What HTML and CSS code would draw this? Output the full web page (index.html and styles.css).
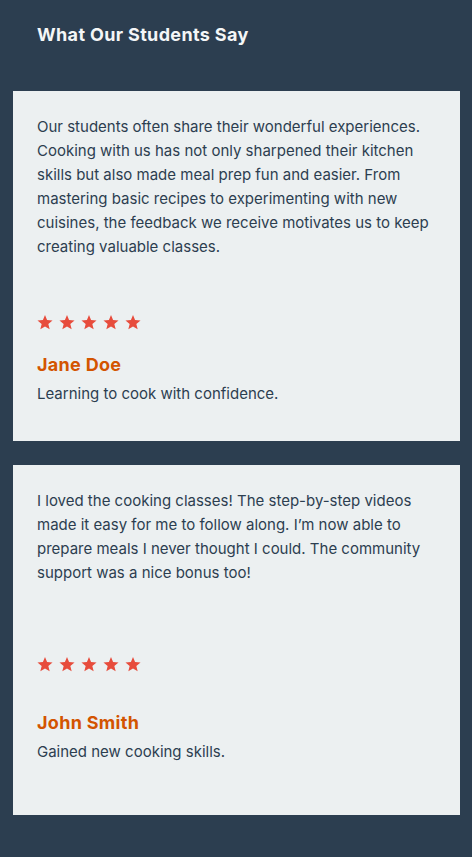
FILE: index.html
```html
<!DOCTYPE html>
<html lang="en">
<head>
<meta charset="utf-8">
<title>What Our Students Say</title>
<link rel="stylesheet" href="styles.css">
</head>
<body>
<section class="testimonials">
  <h2 class="title">What Our Students Say</h2>
  <div class="list">
    <article class="card">
      <p class="quote">Our students often share their wonderful experiences. Cooking with us has not only sharpened their kitchen skills but also made meal prep fun and easier. From mastering basic recipes to experimenting with new cuisines, the feedback we receive motivates us to keep creating valuable classes.</p>
      <div class="stars" aria-label="5 stars">
        <svg class="star" viewBox="0 0 24 24"><path d="M12 1.5l3.1 7.6 8.2.6-6.3 5.3 2 8-7-4.4-7 4.4 2-8L.7 9.7l8.2-.6z"/></svg>
        <svg class="star" viewBox="0 0 24 24"><path d="M12 1.5l3.1 7.6 8.2.6-6.3 5.3 2 8-7-4.4-7 4.4 2-8L.7 9.7l8.2-.6z"/></svg>
        <svg class="star" viewBox="0 0 24 24"><path d="M12 1.5l3.1 7.6 8.2.6-6.3 5.3 2 8-7-4.4-7 4.4 2-8L.7 9.7l8.2-.6z"/></svg>
        <svg class="star" viewBox="0 0 24 24"><path d="M12 1.5l3.1 7.6 8.2.6-6.3 5.3 2 8-7-4.4-7 4.4 2-8L.7 9.7l8.2-.6z"/></svg>
        <svg class="star" viewBox="0 0 24 24"><path d="M12 1.5l3.1 7.6 8.2.6-6.3 5.3 2 8-7-4.4-7 4.4 2-8L.7 9.7l8.2-.6z"/></svg>
      </div>
      <div class="author">
        <h3 class="name">Jane Doe</h3>
        <p class="role">Learning to cook with confidence.</p>
      </div>
    </article>
    <article class="card">
      <p class="quote">I loved the cooking classes! The step-by-step videos made it easy for me to follow along. I’m now able to prepare meals I never thought I could. The community support was a nice bonus too!</p>
      <div class="stars" aria-label="5 stars">
        <svg class="star" viewBox="0 0 24 24"><path d="M12 1.5l3.1 7.6 8.2.6-6.3 5.3 2 8-7-4.4-7 4.4 2-8L.7 9.7l8.2-.6z"/></svg>
        <svg class="star" viewBox="0 0 24 24"><path d="M12 1.5l3.1 7.6 8.2.6-6.3 5.3 2 8-7-4.4-7 4.4 2-8L.7 9.7l8.2-.6z"/></svg>
        <svg class="star" viewBox="0 0 24 24"><path d="M12 1.5l3.1 7.6 8.2.6-6.3 5.3 2 8-7-4.4-7 4.4 2-8L.7 9.7l8.2-.6z"/></svg>
        <svg class="star" viewBox="0 0 24 24"><path d="M12 1.5l3.1 7.6 8.2.6-6.3 5.3 2 8-7-4.4-7 4.4 2-8L.7 9.7l8.2-.6z"/></svg>
        <svg class="star" viewBox="0 0 24 24"><path d="M12 1.5l3.1 7.6 8.2.6-6.3 5.3 2 8-7-4.4-7 4.4 2-8L.7 9.7l8.2-.6z"/></svg>
      </div>
      <div class="author">
        <h3 class="name">John Smith</h3>
        <p class="role">Gained new cooking skills.</p>
      </div>
    </article>
  </div>
</section>
</body>
</html>
```
FILE: styles.css
```css
html, body {
  margin: 0;
  padding: 0;
  background: #2c3e50;
}
body {
  font-family: Inter, "Noto Sans", sans-serif;
  color: #2c3e50;
}
.testimonials {
  padding: 21px 12px 42px 13px;
}
.title {
  margin: 0 0 0 24px;
  font-size: 18px;
  line-height: 27px;
  font-weight: 700;
  color: #f4f6f7;
  letter-spacing: 0.35px;
}
.list {
  margin-top: 43px;
  display: flex;
  flex-direction: column;
  gap: 24px;
}
.card {
  background: #ecf0f1;
  height: 350px;
  box-sizing: border-box;
  padding: 24px 24px 35px;
  display: flex;
  flex-direction: column;
  justify-content: space-between;
}
.card::after {
  content: "";
}
.quote {
  margin: 0 0 55px;
  font-size: 15px;
  line-height: 24px;
}
.stars {
  display: flex;
  gap: 6px;
  height: 16px;
  margin-bottom: 21px;
}
.star {
  width: 16px;
  height: 16px;
  fill: #e74c3c;
}
.name {
  margin: 0;
  font-size: 18px;
  line-height: 27px;
  font-weight: 700;
  letter-spacing: 0.3px;
  color: #d35400;
}
.role {
  margin: 4px 0 0;
  font-size: 15px;
  line-height: 24px;
}
```
